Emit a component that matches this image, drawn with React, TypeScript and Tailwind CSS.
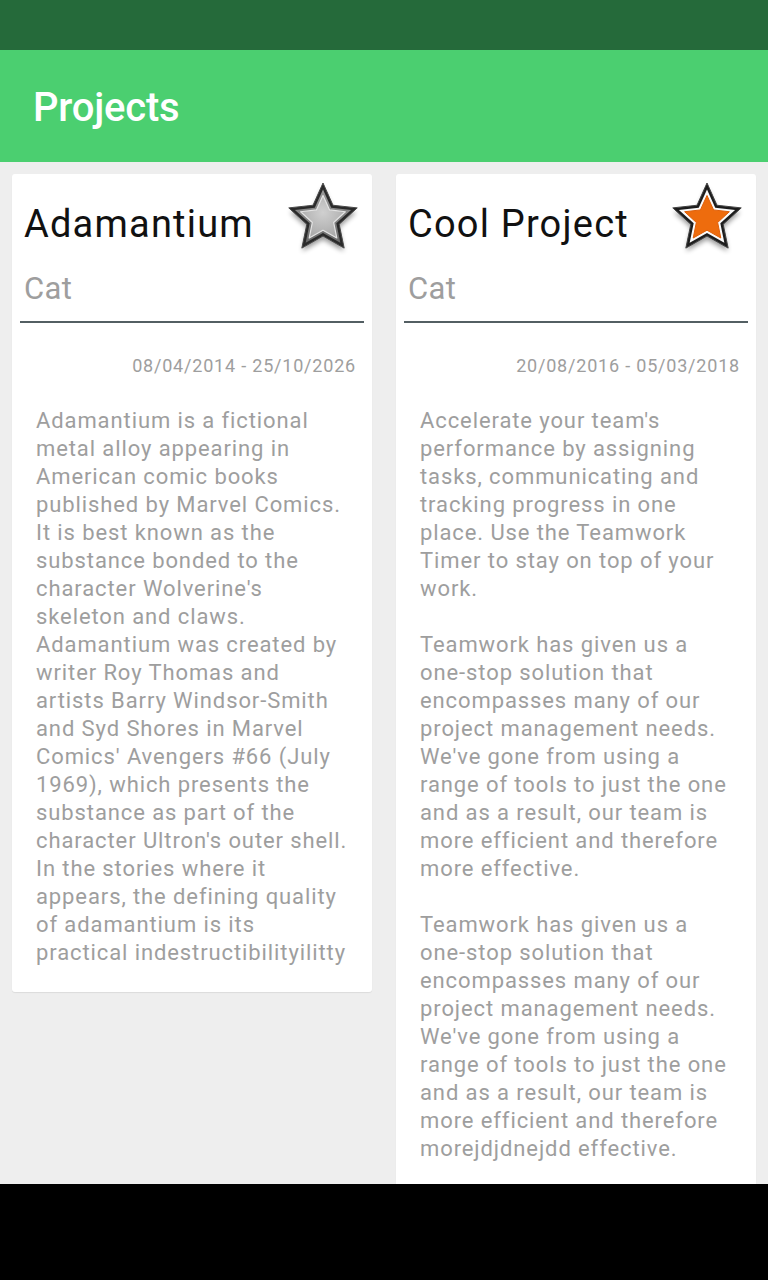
import React from "react";

function starPoints(cx: number, cy: number, R: number, r: number) {
  const pts: string[] = [];
  for (let i = 0; i < 10; i++) {
    const rad = i % 2 === 0 ? R : r;
    const a = -Math.PI / 2 + (i * Math.PI) / 5;
    pts.push(`${(cx + rad * Math.cos(a)).toFixed(2)},${(cy + rad * Math.sin(a)).toFixed(2)}`);
  }
  return pts.join(" ");
}

function Star({ active, id }: { active: boolean; id: string }) {
  const cx = 35;
  const cy = 37;
  const outer = starPoints(cx, cy, 36, 17);
  const mid = starPoints(cx, cy, 29.5, 14);
  const inner = starPoints(cx, cy, 23.5, 11.2);
  return (
    <svg width="72" height="72" viewBox="0 0 72 72" overflow="visible">
      <defs>
        <filter id={`blur-${id}`} x="-30%" y="-30%" width="160%" height="160%">
          <feGaussianBlur stdDeviation="2.4" />
        </filter>
        <filter id={`soft-${id}`} x="-10%" y="-10%" width="120%" height="120%">
          <feGaussianBlur stdDeviation="0.7" />
        </filter>
        <radialGradient id={`g-${id}`} cx="50%" cy="40%" r="65%">
          <stop offset="0%" stopColor="#d0d0d0" />
          <stop offset="100%" stopColor="#a6a6a6" />
        </radialGradient>
        <linearGradient id={`band-${id}`} x1="0" y1="0" x2="0" y2="1">
          <stop offset="0%" stopColor="#9a9a9a" />
          <stop offset="100%" stopColor="#6a6a6a" />
        </linearGradient>
      </defs>
      <polygon points={starPoints(cx, cy + 4, 35, 16.5)} fill="#000" opacity="0.4" filter={`url(#blur-${id})`} />
      <g filter={`url(#soft-${id})`}>
        {active ? (
          <>
            <polygon points={outer} fill="#1e1e1e" stroke="#444" strokeWidth="1" strokeLinejoin="round" />
            <polygon points={mid} fill="#fafafa" strokeLinejoin="round" />
            <polygon points={inner} fill="#ee6c10" stroke="#e06008" strokeWidth="1" strokeLinejoin="round" />
          </>
        ) : (
          <>
            <polygon points={outer} fill="#2a2a2a" stroke="#4a4a4a" strokeWidth="1" strokeLinejoin="round" />
            <polygon points={mid} fill={`url(#band-${id})`} strokeLinejoin="round" />
            <polygon points={inner} fill={`url(#g-${id})`} stroke="#e4e4e4" strokeWidth="1.2" strokeLinejoin="round" />
          </>
        )}
      </g>
    </svg>
  );
}

type Project = {
  title: string;
  cat: string;
  dates: string;
  active: boolean;
  lines: string[];
};

const projects: Project[] = [
  {
    title: "Adamantium",
    cat: "Cat",
    dates: "08/04/2014 - 25/10/2026",
    active: false,
    lines: [
      "Adamantium is a fictional",
      "metal alloy appearing in",
      "American comic books",
      "published by Marvel Comics.",
      "It is best known as the",
      "substance bonded to the",
      "character Wolverine's",
      "skeleton and claws.",
      "Adamantium was created by",
      "writer Roy Thomas and",
      "artists Barry Windsor-Smith",
      "and Syd Shores in Marvel",
      "Comics' Avengers #66 (July",
      "1969), which presents the",
      "substance as part of the",
      "character Ultron's outer shell.",
      "In the stories where it",
      "appears, the defining quality",
      "of adamantium is its",
      "practical indestructibilityilitty",
    ],
  },
  {
    title: "Cool Project",
    cat: "Cat",
    dates: "20/08/2016 - 05/03/2018",
    active: true,
    lines: [
      "Accelerate your team's",
      "performance by assigning",
      "tasks, communicating and",
      "tracking progress in one",
      "place. Use the Teamwork",
      "Timer to stay on top of your",
      "work.",
      "",
      "Teamwork has given us a",
      "one-stop solution that",
      "encompasses many of our",
      "project management needs.",
      "We've gone from using a",
      "range of tools to just the one",
      "and as a result, our team is",
      "more efficient and therefore",
      "more effective.",
      "",
      "Teamwork has given us a",
      "one-stop solution that",
      "encompasses many of our",
      "project management needs.",
      "We've gone from using a",
      "range of tools to just the one",
      "and as a result, our team is",
      "more efficient and therefore",
      "morejdjdnejdd effective.",
    ],
  },
];

function Card({ p, id }: { p: Project; id: string }) {
  return (
    <div className="bg-white rounded-[3px] w-[360px] pb-[25px] shadow-[0_1px_1px_rgba(0,0,0,0.08)]">
      <div className="flex justify-between items-start pt-2 pl-3 pr-3 h-[80px]">
        <div className="mt-[19px] text-[38px] leading-[46px] tracking-[1.2px] text-[#111] whitespace-nowrap">
          {p.title}
        </div>
        <Star active={p.active} id={id} />
      </div>
      <div className="mt-[15px] px-3 text-[31px] leading-[40px] tracking-[0.3px] text-[#9e9e9e]">{p.cat}</div>
      <div className="mt-3 mx-2 h-[2px] bg-[#535f63]" />
      <div className="mt-[31px] pr-4 text-right text-[18px] leading-[24px] tracking-[0.8px] text-[#9e9e9e] whitespace-nowrap">
        {p.dates}
      </div>
      <div className="mt-[29px] pl-6 text-[22px] leading-[28px] tracking-[0.9px] text-[#9e9e9e]">
        {p.lines.map((l, i) => (
          <div key={i} className="h-[28px] whitespace-nowrap">
            {l}
          </div>
        ))}
      </div>
    </div>
  );
}

export default function App() {
  return (
    <div
      className="w-[768px] h-[1280px] flex flex-col overflow-hidden bg-[#eeeeee]"
      style={{ fontFamily: "Roboto, 'Noto Sans', sans-serif" }}
    >
      <div className="h-[50px] bg-[#256a3a] shrink-0" />
      <div className="h-[112px] bg-[#4bcf70] shrink-0 flex items-center pl-[33px]">
        <div className="text-white text-[40px] font-medium leading-none mt-[4px] tracking-[-0.2px]">Projects</div>
      </div>
      <div className="flex-1 overflow-hidden flex items-start gap-6 px-3 pt-3">
        {projects.map((p, i) => (
          <Card key={i} p={p} id={`s${i}`} />
        ))}
      </div>
      <div className="h-[96px] bg-black shrink-0" />
    </div>
  );
}
